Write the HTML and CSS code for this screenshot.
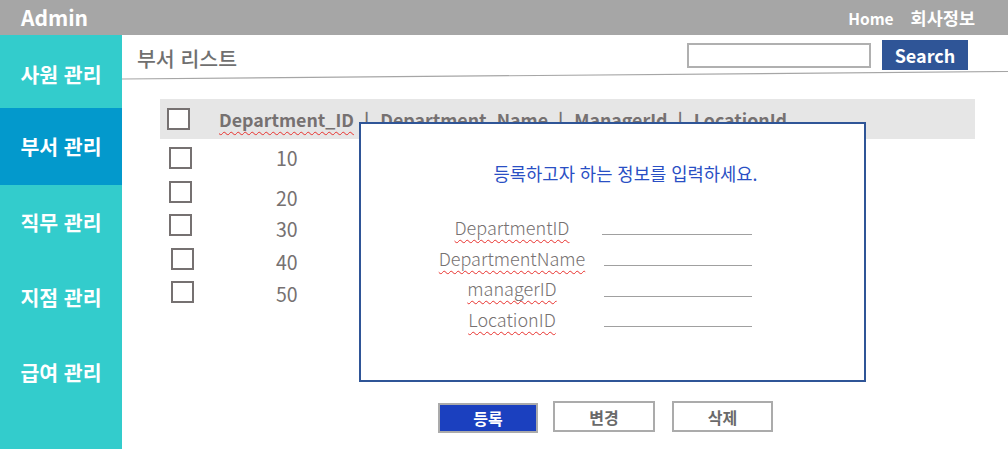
FILE: index.html
```html
<!DOCTYPE html>
<html lang="ko">
<head>
<meta charset="utf-8">
<title>부서 리스트</title>
<link rel="stylesheet" href="styles.css">
</head>
<body>
<header class="topbar">
  <span class="brand">Admin</span>
  <nav class="toplinks"><span class="home">Home</span><span>회사정보</span></nav>
</header>
<div class="layout">
  <aside class="sidebar">
    <div class="menu-item first">사원 관리</div>
    <div class="menu-item active">부서 관리</div>
    <div class="menu-item">직무 관리</div>
    <div class="menu-item">지점 관리</div>
    <div class="menu-item">급여 관리</div>
  </aside>
  <main class="main">
    <div class="pagehead">
      <h1 class="title">부서 리스트</h1>
      <div class="search">
        <input class="search-input" type="text">
        <button class="search-btn">Search</button>
      </div>
    </div>
    <svg class="rule" width="886" height="9" viewBox="0 0 886 9"><line x1="0" y1="8" x2="886" y2="0.5" stroke="#a6a6a6" stroke-width="1.2"/></svg>
    <section class="content">
      <div class="thead">
        <span class="box"></span>
        <span class="cols"><span class="spell">Department_ID</span><span class="sep">|</span>Department_Name<span class="sep">|</span>ManagerId<span class="sep">|</span>LocationId</span>
      </div>
      <div class="rows">
        <div class="row"><span class="box"></span><span class="num">10</span></div>
        <div class="row"><span class="box"></span><span class="num">20</span></div>
        <div class="row"><span class="box"></span><span class="num">30</span></div>
        <div class="row"><span class="box"></span><span class="num">40</span></div>
        <div class="row"><span class="box"></span><span class="num">50</span></div>
      </div>
      <div class="actions">
        <button class="btn primary">등록</button>
        <button class="btn change">변경</button>
        <button class="btn delete">삭제</button>
      </div>
      <div class="modal">
        <p class="modal-title">등록하고자 하는 정보를 입력하세요.</p>
        <div class="form">
          <div class="frow"><span class="label spell">DepartmentID</span><span class="field"></span></div>
          <div class="frow"><span class="label spell">DepartmentName</span><span class="field"></span></div>
          <div class="frow"><span class="label spell">managerID</span><span class="field"></span></div>
          <div class="frow"><span class="label spell">LocationID</span><span class="field"></span></div>
        </div>
      </div>
    </section>
  </main>
</div>
</body>
</html>
```

FILE: styles.css
```css
* { box-sizing: border-box; }
html, body { margin: 0; padding: 0; }
body {
  width: 1008px;
  height: 449px;
  overflow: hidden;
  background: #fff;
  font-family: "Noto Sans CJK KR", "Noto Sans", sans-serif;
}

.topbar {
  height: 35px;
  background: #a6a6a6;
  display: flex;
  align-items: center;
  justify-content: space-between;
  padding: 0 33px 0 21px;
  color: #fff;
  font-weight: 700;
}
.brand { font-size: 21px; line-height: 35px; }
.toplinks { display: flex; align-items: baseline; gap: 17px; font-size: 17.5px; line-height: 35px; }
.home { font-size: 15.5px; }

.layout { display: flex; height: 414px; }

.sidebar {
  width: 122px;
  flex: none;
  background: #33cccc;
  color: #fff;
  font-weight: 700;
  font-size: 20.5px;
}
.menu-item {
  height: 75px;
  display: flex;
  align-items: center;
  justify-content: center;
  padding-bottom: 1px;
}
.menu-item.first { height: 73px; padding-top: 5px; }
.menu-item.active { background: #0399cc; height: 77px; }

.main { flex: 1; display: flex; flex-direction: column; }

.pagehead {
  height: 36px;
  display: flex;
  align-items: flex-start;
  justify-content: space-between;
  padding: 0 40px 0 15px;
}
.title {
  margin: 9px 0 0;
  font-size: 20.5px;
  font-weight: 500;
  color: #707070;
  line-height: 28px;
}
.search { display: flex; align-items: center; gap: 11px; margin-top: 5px; }
.search-input {
  width: 184px;
  height: 25px;
  border: 2px solid #b0b0b0;
  background: #fff;
  margin: 0;
}
.search-btn {
  width: 86px;
  height: 30px;
  border: none;
  background: #2f5597;
  color: #fff;
  font-family: inherit;
  font-weight: 700;
  font-size: 18px;
  line-height: 30px;
  padding: 0 0 2px;
}

.rule { display: block; }

.content { position: relative; flex: 1; padding: 19px 33px 0 38px; }

.box {
  display: block;
  width: 23px;
  height: 22px;
  border: 2px solid #767171;
  background: #fff;
  flex: none;
}

.thead {
  height: 40px;
  background: #e6e6e6;
  display: flex;
  align-items: center;
  padding-left: 7px;
}
.cols {
  margin-left: 29px;
  font-size: 17.8px;
  font-weight: 700;
  color: #767171;
  white-space: nowrap;
  line-height: 26px;
  padding-bottom: 1px;
}
.sep { font-weight: 700; padding: 0 11px 0 10px; }
.spell {
  text-decoration: underline wavy #e8302c;
  text-decoration-thickness: 1px;
  text-underline-offset: 4px;
  text-decoration-skip-ink: none;
}

.rows { padding-top: 2px; }
.row {
  height: 34px;
  display: flex;
  align-items: center;
  padding-left: 9px;
}
.num {
  margin-left: 84px;
  font-size: 19.5px;
  color: #767171;
  line-height: 24px;
}
.row:nth-child(2) { height: 33px; }
.row:nth-child(2) .num { margin-top: 12px; }
.row:nth-child(3) .num { margin-top: 8px; }
.row:nth-child(4) { padding-left: 11px; }
.row:nth-child(4) .num { margin-left: 82px; margin-top: 6px; }
.row:nth-child(5) { padding-left: 11px; height: 32px; }
.row:nth-child(5) .num { margin-left: 82px; margin-top: 4px; }

.actions {
  display: flex;
  align-items: center;
  gap: 15px;
  margin-top: 92px;
  padding-left: 278px;
}
.btn {
  width: 101px;
  height: 31px;
  border: 2px solid #ababab;
  background: #fff;
  color: #6a6a6a;
  font-family: inherit;
  font-weight: 700;
  font-size: 16px;
  line-height: 26px;
  padding: 0;
}
.btn.primary { background: #1b40bf; color: #fff; width: 100px; height: 30px; margin-top: 3px; }
.btn.change { width: 102px; }
.btn.delete { margin-left: 2px; }

.modal {
  position: absolute;
  left: 237px;
  top: 42px;
  width: 507px;
  height: 260px;
  border: 2px solid #2f5597;
  background: #fff;
}
.modal-title {
  margin: 37px 0 0;
  padding-left: 26px;
  text-align: center;
  font-size: 17.7px;
  line-height: 24px;
  color: #2a4fc4;
}
.form { margin-top: 26px; }
.frow {
  display: grid;
  grid-template-columns: 180px 150px;
  align-items: center;
  height: 31px;
  padding-left: 61px;
}
.frow:nth-child(3) { height: 30px; }
.label {
  text-align: center;
  font-size: 18px;
  font-weight: 300;
  color: #767171;
  line-height: 26px;
  white-space: nowrap;
}
.field {
  display: block;
  height: 17px;
  border-bottom: 1px solid #a0a0a0;
  margin-left: 2px;
}
.frow:first-child .field { margin-left: 0; }
```
